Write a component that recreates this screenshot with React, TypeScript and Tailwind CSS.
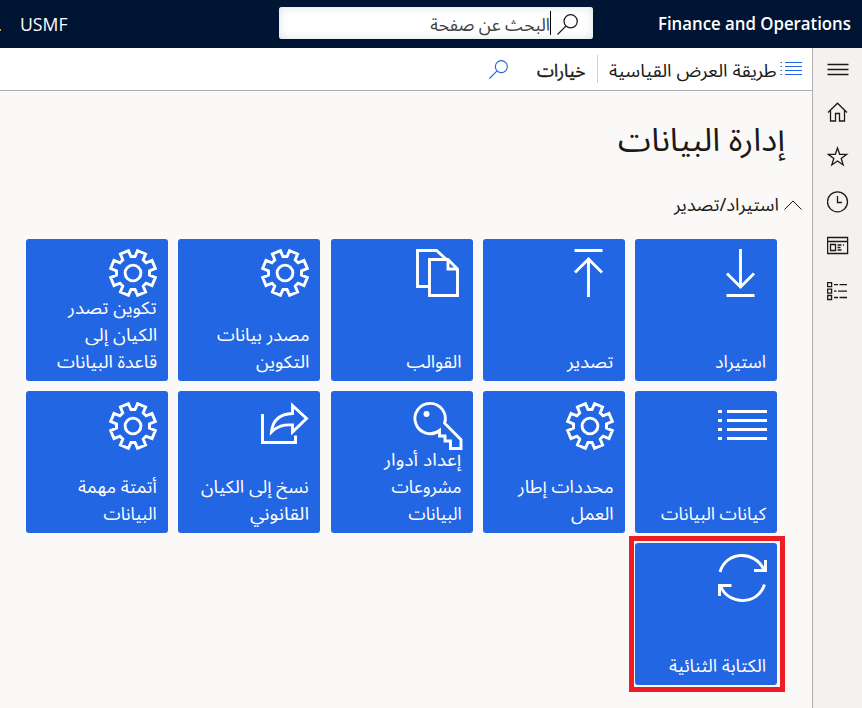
import { useLayoutEffect, useRef, useState, type ReactNode } from 'react';

const ARABIC = `font-['Segoe_UI','Noto_Sans_Arabic','DejaVu_Sans',sans-serif]`;
const LATIN = `font-['Segoe_UI','Open_Sans',sans-serif]`;

/** One line of text, condensed horizontally to a fixed measure. */
function FitText({ children, width, className = '' }: { children: string; width: number; className?: string }) {
  const inner = useRef<HTMLSpanElement>(null);
  const [scale, setScale] = useState(1);
  useLayoutEffect(() => {
    if (inner.current) setScale(width / inner.current.offsetWidth);
  }, [width]);
  return (
    <span className={`flex justify-start whitespace-nowrap ${className}`} style={{ width }}>
      <span ref={inner} className="block shrink-0 origin-right" style={{ transform: `scaleX(${scale})` }}>
        {children}
      </span>
    </span>
  );
}

function polar(radius: number, degrees: number) {
  const a = (degrees * Math.PI) / 180;
  return `${(24 + radius * Math.sin(a)).toFixed(2)},${(24 - radius * Math.cos(a)).toFixed(2)}`;
}

const gearPoints = Array.from({ length: 8 }, (_, i) => {
  const valley = i * 45;
  return [polar(16.6, valley - 7), polar(16.6, valley + 7), polar(22.8, valley + 11.5), polar(22.8, valley + 33.5)].join(' ');
}).join(' ');

function TileIcon({ children }: { children: ReactNode }) {
  return (
    <svg viewBox="0 0 48 48" className="h-12 w-12 overflow-visible" fill="none" stroke="currentColor" strokeWidth="2.9">
      {children}
    </svg>
  );
}

const icons: Record<string, ReactNode> = {
  download: <path d="M22.5 0V38M9 24.5l13.5 13.5L36 24.5M8.5 46.5h28" />,
  upload: <path d="M22.5 48V10M9 23.5l13.5-13.5L36 23.5M8.5 1.5h28" />,
  pages: <path d="M15.500 37.5H3.500V1.5h19l10 9M15.500 10.500h18.500l9.500 9.500v26.500H15.500zM34 10.500V20H43.500" />,
  gear: (
    <>
      <polygon points={gearPoints} />
      <circle cx="24" cy="24" r="7.900" />
    </>
  ),
  list: (
    <>
      <path d="M9 9.500h40M9 18.500h40M9 27.500h40M9 36.500h40" />
      <path d="M0 9.500h4M0 18.500h4M0 27.500h4M0 36.500h4" />
    </>
  ),
  key: (
    <>
      <path d="M30.600 21.200A15.200 15.200 0 1 0 25.500 28.500V34h5.500v5h5.500v7.500h10.500v-8.800z" />
      <circle cx="12.500" cy="12" r="3" fill="currentColor" stroke="none" />
    </>
  ),
  share: <path d="M1.500 12v28.500h33v-7M31.500 3.500v8C18 12 11.500 19 10.500 30 16.500 24 22 22.500 31.500 23v7L45.500 16.500z" />,
  sync: <path d="M2 18C8-3.500 37-3.500 45.500 15M47.500 6v10.500H36M46.500 30.500C40 51.500 11 51.500 3 33M1.500 42V31.500h12" />,
};

type Line = [string, number];
type TileData = { icon: string; lines: Line[]; marked?: boolean };

const tiles: TileData[] = [
  { icon: 'download', lines: [['استيراد', 51]] },
  { icon: 'upload', lines: [['تصدير', 46]] },
  { icon: 'pages', lines: [['القوالب', 54.5]] },
  { icon: 'gear', lines: [['مصدر بيانات', 93], ['التكوين', 53]] },
  { icon: 'gear', lines: [['تكوين تصدر', 89], ['الكيان إلى', 72], ['قاعدة البيانات', 100]] },
  { icon: 'list', lines: [['كيانات البيانات', 105]] },
  { icon: 'gear', lines: [['محددات إطار', 96], ['العمل', 43]] },
  { icon: 'key', lines: [['إعداد أدوار', 77], ['مشروعات', 70], ['البيانات', 53.5]] },
  { icon: 'share', lines: [['نسخ إلى الكيان', 108], ['القانوني', 59]] },
  { icon: 'gear', lines: [['أتمتة مهمة', 79], ['البيانات', 53.5]] },
  { icon: 'sync', lines: [['الكتابة الثنائية', 97]], marked: true },
];

function Tile({ icon, lines, marked, lowered }: TileData & { lowered: boolean }) {
  return (
    <div className="relative flex h-[142px] flex-col justify-between rounded-[3px] bg-[#2266e3] pt-[10px] pr-[11px] pb-[5px] text-white">
      <div className={lowered ? 'h-[43px] w-12 pt-px' : 'h-[43px] w-12'}>
        <TileIcon>{icons[icon]}</TileIcon>
      </div>
      <div className="text-[17.500px] leading-[27px]">
        {lines.map(([text, width]) => (
          <FitText key={text} width={width}>
            {text}
          </FitText>
        ))}
      </div>
      {marked && <div className="absolute -top-[7px] -left-[6px] h-[156px] w-[156px] border-[5px] border-[#ee1c25]" />}
    </div>
  );
}

function Magnifier({ className }: { className: string }) {
  return (
    <svg viewBox="0 0 20 20" className={className} fill="none" stroke="currentColor" strokeWidth="1.200">
      <circle cx="13" cy="7" r="6.300" />
      <path d="M8.500 11.500L0.500 19.500" />
    </svg>
  );
}

function NavIcon({ children }: { children: ReactNode }) {
  return (
    <svg viewBox="0 0 22 22" className="h-[22px] w-[22px]" fill="none" stroke="currentColor" strokeWidth="1.300">
      {children}
    </svg>
  );
}

function SideNav() {
  return (
    <nav className="flex w-[50px] shrink-0 flex-col items-center gap-[22.500px] border-l border-[#b3b0ad] bg-[#f3f2f1] pt-[9px] text-[#1b1a19]">
      <NavIcon>
        <path d="M.5 7.500h21M.5 12.500h21M.5 17.500h21" />
      </NavIcon>
      <NavIcon>
        <path d="M1 10.500L10.500 1.200 20 10.500M3.500 8.500v10.500h5V11.500h4v7.500h5V8.500" />
      </NavIcon>
      <NavIcon>
        <path d="M10.500 2l2.200 6.300h7l-5.500 4.200 2 6.500-5.700-4-5.700 4 2-6.500-5.500-4.200h7z" />
      </NavIcon>
      <NavIcon>
        <circle cx="10.500" cy="10.800" r="10" />
        <path d="M10.500 5v6.500h4.500" />
      </NavIcon>
      <NavIcon>
        <path d="M.6 2.500h20v16H.6zM.6 6.500h20M3.500 9.500h5v6h-5zM10.500 10h4M10.500 12.500h3M10.500 15h4M16 10h1" />
      </NavIcon>
      <NavIcon>
        <path d="M.6 2.700h4v4h-4zM.6 9.100h4v4h-4zM.6 15.500h4v4h-4zM7 4.700h4M12.500 4.700H20M7 11.100h2.500M11 11.100h9M7 17.500h4M12.500 17.500H20" />
      </NavIcon>
    </nav>
  );
}

export default function App() {
  return (
    <div dir="rtl" className={`flex h-[708px] w-[862px] flex-col overflow-hidden bg-[#faf9f8] text-[#1b1a19] ${ARABIC}`}>
      <header className="flex h-12 shrink-0 items-center bg-[#001433] pr-[11px] text-white">
        <FitText width={193} className={`${LATIN} -mt-[1px] text-[18px] font-semibold`}>
          Finance and Operations
        </FitText>
        <div className="mr-[65px] -mt-[2px] flex h-8 w-[315px] items-center rounded-[3px] bg-white pr-[15px] text-[#1b1a19] shadow-[inset_0_0_10px_#dfe1e8]">
          <Magnifier className="mt-[3px] h-[21px] w-[21px]" />
          <span className="mr-[6px] h-6 w-px bg-black" />
          <FitText width={120} className="mt-[7px] text-[17.500px] text-[#444342]">
            البحث عن صفحة
          </FitText>
        </div>
        <FitText width={47} className={`${LATIN} mr-[212px] text-[18px]`}>
          USMF
        </FitText>
        <span className="mr-[19px] mb-[17px] h-[2px] w-px self-end bg-[#c9a227]" />
      </header>
      <div className="flex min-h-0 grow">
        <SideNav />
        <div className="flex grow flex-col">
          <div className="flex h-[43px] items-center border-b border-[#b3b0ad] bg-white pr-[10px]">
            <svg viewBox="0 0 22 14" className="-mt-[1px] h-[14px] w-[22px] text-[#2266e3]" fill="none" stroke="currentColor" strokeWidth="1.100">
              <path d="M5 .5h17M5 4.500h17M5 8.500h17M5 12.500h17M.5 .5h1.500M.5 4.500h1.500M.5 8.500h1.500M.5 12.500h1.500" />
            </svg>
            <FitText width={168} className="mt-[6px] mr-[3px] text-[17.500px]">
              طريقة العرض القياسية
            </FitText>
            <span className="mr-[11px] h-7 w-px bg-[#d2d0ce]" />
            <FitText width={48} className="mt-[6px] mr-[12px] text-[17.500px] [-webkit-text-stroke:0.400px]">
              خيارات
            </FitText>
            <Magnifier className="mr-[29px] h-[19px] w-[19px] text-[#2266e3]" />
          </div>
          <h1 className="mt-[25px] pr-[27px] text-[32px] leading-[50px]">
            <FitText width={167}>إدارة البيانات</FitText>
          </h1>
          <div className="mt-[24px] flex h-[30px] items-center pr-[10px]">
            <svg viewBox="0 0 18 10" className="-mt-[1px] h-[10px] w-[18px]" fill="none" stroke="currentColor">
              <path d="M.5 9.500L9 1l8.500 8.500" />
            </svg>
            <FitText width={105} className="mt-[3px] mr-[5px] text-[17.500px]">
              استيراد/تصدير
            </FitText>
          </div>
          <div className="mt-[19px] mr-[35px] grid w-[751px] grid-cols-[repeat(5,142px)] gap-x-[10.250px] gap-y-[10px]">
            {tiles.map((tile, index) => (
              <Tile key={index} {...tile} lowered={index >= 5} />
            ))}
          </div>
        </div>
      </div>
    </div>
  );
}
